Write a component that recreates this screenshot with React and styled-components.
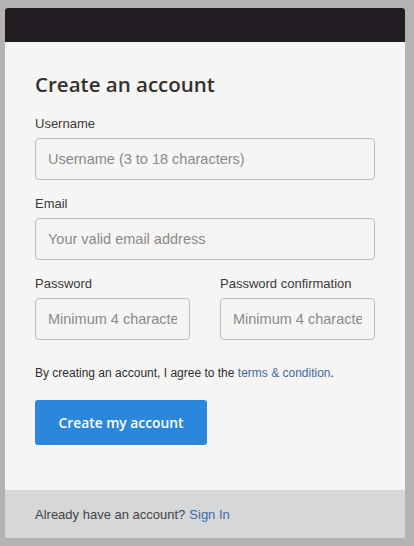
import React from 'react';
import styled, { createGlobalStyle } from 'styled-components';

const GlobalStyle = createGlobalStyle`
  html, body {
    margin: 0;
    padding: 0;
    background: #b5b3b1;
  }
  body {
    font-family: "Liberation Sans", Arial, sans-serif;
  }
`;

const Page = styled.div`
  width: 414px;
  height: 546px;
  padding: 8px 0 0 5px;
  box-sizing: border-box;
  background: #b5b3b1;
`;

const Card = styled.div`
  width: 400px;
  border-radius: 3px;
  overflow: hidden;
  background: #f6f5f3;
`;

const TopBar = styled.div`
  height: 34px;
  background: #211c22;
`;

const Body = styled.form`
  padding: 29px 30px 45px 30px;
  display: flex;
  flex-direction: column;
`;

const Title = styled.h1`
  margin: 0 0 19px 0;
  font-family: "Open Sans", Lato, sans-serif;
  font-weight: 600;
  font-size: 20.5px;
  line-height: 26px;
  color: #33302e;
`;

const Field = styled.div`
  display: flex;
  flex-direction: column;
  margin-bottom: 16px;
`;

const Label = styled.label`
  font-size: 13px;
  line-height: 16px;
  color: #3a3a3a;
  margin-bottom: 6px;
`;

const Input = styled.input`
  box-sizing: border-box;
  width: 100%;
  height: 42px;
  border: 1px solid #bdbdbd;
  border-radius: 4px;
  background: #f6f5f3;
  padding: 0 12px;
  font-family: "Liberation Sans", Arial, sans-serif;
  font-size: 14.5px;
  color: #333;
  outline: none;

  &::placeholder {
    color: #8a8a8a;
  }
`;

const Row = styled.div`
  display: grid;
  grid-template-columns: 155px 155px;
  column-gap: 30px;
`;

const Terms = styled.p`
  margin: 9px 0 19px 0;
  font-size: 12px;
  line-height: 16px;
  color: #2e2e2e;
`;

const Link = styled.a`
  color: #3f6aa3;
  text-decoration: none;
`;

const Button = styled.button`
  width: 172px;
  height: 45px;
  border: none;
  border-radius: 3px;
  background: #2b87dc;
  color: #fff;
  font-family: "Open Sans", Lato, sans-serif;
  font-weight: 600;
  font-size: 13.8px;
  cursor: pointer;
`;

const Footer = styled.div`
  height: 48px;
  background: #d6d7d9;
  display: flex;
  align-items: center;
  padding: 0 30px;
  font-size: 13px;
  color: #444;
`;

const FooterLink = styled(Link)`
  color: #3d69ad;
  margin-left: 4px;
`;

export default function App() {
  return (
    <>
      <GlobalStyle />
      <Page>
        <Card>
          <TopBar />
          <Body onSubmit={(e) => e.preventDefault()}>
            <Title>Create an account</Title>
            <Field>
              <Label>Username</Label>
              <Input placeholder="Username (3 to 18 characters)" />
            </Field>
            <Field>
              <Label>Email</Label>
              <Input placeholder="Your valid email address" />
            </Field>
            <Row>
              <Field>
                <Label>Password</Label>
                <Input type="password" placeholder="Minimum 4 characters" />
              </Field>
              <Field>
                <Label>Password confirmation</Label>
                <Input type="password" placeholder="Minimum 4 characters" />
              </Field>
            </Row>
            <Terms>
              By creating an account, I agree to the <Link href="#">terms &amp; condition</Link>.
            </Terms>
            <div>
              <Button type="submit">Create my account</Button>
            </div>
          </Body>
          <Footer>
            Already have an account?<FooterLink href="#">Sign In</FooterLink>
          </Footer>
        </Card>
      </Page>
    </>
  );
}
